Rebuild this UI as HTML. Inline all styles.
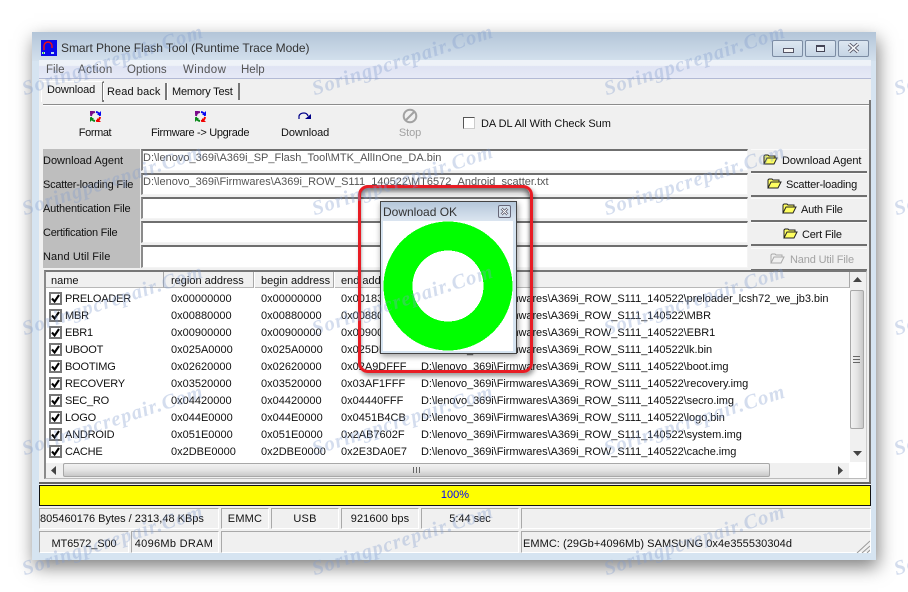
<!DOCTYPE html>
<html><head><meta charset="utf-8"><style>
html,body{margin:0;padding:0;background:#fff}
#r{position:relative;width:908px;height:592px;overflow:hidden;background:#fff;font-family:"Liberation Sans",sans-serif;font-size:11px;color:#111}
#r div,#r svg{position:absolute}
.t{white-space:nowrap;line-height:14px;height:14px}
.c{text-align:center}
.ed{left:141px;width:604px;background:#fff;border:1px solid #f4f4f4;border-top:2px solid #6f6f6f;border-left:2px solid #8a8a8a;box-sizing:content-box}
.b{left:751px;width:116px;background:#f0f0f0;border-top:1px solid #fafafa;border-bottom:2px solid #6f6f6f;text-align:center}
.h{background:#f0f0f0;border-right:1px solid #a8a8a8;border-bottom:1px solid #b8b8b8;height:15px;top:272px}
.p{background:#f0f0f0;border-top:1px solid #a9a9a9;border-left:1px solid #a9a9a9;border-right:1px solid #fff;border-bottom:1px solid #fff;box-sizing:border-box}
.k{left:49px;width:9px;height:9px;border:2px solid #777;background:#fff}
.n{left:65px;letter-spacing:-.2px}
.w{color:rgba(130,155,205,.34);font:italic bold 20.5px "Liberation Serif",serif;letter-spacing:1px;white-space:nowrap;transform:rotate(-18deg);transform-origin:0 100%;height:28px;line-height:28px;pointer-events:none}
.f{letter-spacing:-.05px}
</style></head><body><div id="r">
<svg width="0" height="0" style="left:0;top:0"><defs>
<g id="ck"><path d="M1 4.5l2.6 3L8 1" fill="none" stroke="#000" stroke-width="2.1"/></g>
<g id="fm"><path d="M2 6A4.5 4.5 0 0 1 6 2" fill="none" stroke="#7a0a8a" stroke-width="2"/><path d="M1 5V1h4z" fill="#7a0a8a"/><path d="M7 2A4.5 4.5 0 0 1 11 6" fill="none" stroke="#0808f0" stroke-width="2"/><path d="M12 1v4H8z" fill="#0808f0"/><path d="M11 7A4.5 4.5 0 0 1 7 11" fill="none" stroke="#f00000" stroke-width="2"/><path d="M12 12H8V8z" fill="#f00000"/><path d="M6 11A4.5 4.5 0 0 1 2 7" fill="none" stroke="#0a8a1a" stroke-width="2"/><path d="M1 12V8h4z" fill="#0a8a1a"/></g>
<g id="fo"><path d="M1 10V2l1-1h3l1 1h6v2H4L1 10h10l3-6H4" fill="#ffff60" stroke="#222" stroke-width="1"/></g>
</defs></svg>

<div style="left:32px;top:32px;width:844px;height:528px;background:#d6e4f1;box-shadow:2px 7px 17px rgba(0,0,0,.5)"></div>
<div style="left:32px;top:32px;width:844px;height:29px;background:linear-gradient(#b3c5d8,#d3e0ed)"></div>
<svg style="left:41px;top:40px" width="16" height="16" viewBox="0 0 16 16"><rect width="16" height="16" fill="#0a0ae8"/><path d="M3 10V6a4 4 0 0 1 8 0v2" fill="none" stroke="#f01010" stroke-width="1.5"/><path d="M1 13h3M10 13h3" stroke="#bde" stroke-width="2"/><path d="M2 13h1" stroke="#2c2" stroke-width="2"/></svg>
<div class="t" style="left:61px;top:41px;font-size:12px;letter-spacing:-.05px;color:#333">Smart Phone Flash Tool (Runtime Trace Mode)</div>

<div style="left:772px;top:40px;width:29px;height:15px;border:1px solid #7c8ca3;border-radius:2px;background:linear-gradient(#dde7f1,#c6d5e5)"></div>
<div style="left:783px;top:48px;width:9px;height:3px;border:1px solid #556;background:#f4f4f4"></div>
<div style="left:805px;top:40px;width:29px;height:15px;border:1px solid #7c8ca3;border-radius:2px;background:linear-gradient(#dde7f1,#c6d5e5)"></div>
<div style="left:816px;top:45px;width:7px;height:4px;border:1px solid #445;border-width:2px 1px 1px;background:#e8eef5"></div>
<div style="left:838px;top:40px;width:29px;height:15px;border:1px solid #7c8ca3;border-radius:2px;background:linear-gradient(#dde7f1,#c6d5e5)"></div>
<svg style="left:847px;top:43px" width="13" height="11" viewBox="0 0 13 11"><path d="M2 1l9 8M11 1L2 9" stroke="#556" stroke-width="3.4"/><path d="M2 1l9 8M11 1L2 9" stroke="#f4f6f8" stroke-width="1.6"/></svg>

<div style="left:39px;top:60px;width:832px;height:493px;background:#f0f0f0"></div>
<div style="left:39px;top:60px;width:832px;height:19px;background:linear-gradient(#eef2f8 0,#eef2f8 30%,#dfe3f3 36%,#e6e9f6 100%);border-bottom:1px solid #b3bad5;box-sizing:border-box"></div>
<div class="t" style="left:46px;top:63px;color:#555;font-size:11.5px">File</div>
<div class="t" style="left:78px;top:63px;color:#555;font-size:11.5px;letter-spacing:.45px">Action</div>
<div class="t" style="left:127px;top:63px;color:#555;font-size:11.5px">Options</div>
<div class="t" style="left:183px;top:63px;color:#555;font-size:11.5px;letter-spacing:.4px">Window</div>
<div class="t" style="left:241px;top:63px;color:#555;font-size:11.5px">Help</div>

<div style="left:41px;top:81px;width:60px;height:20px;background:#f0f0f0;border-top:1px solid #fff;border-left:1px solid #fff;border-right:2px solid #777"></div>
<div class="t" style="left:47px;top:83px;letter-spacing:-.1px">Download</div>
<div style="left:103px;top:83px;width:61px;height:17px;border-left:1px solid #fff;border-right:2px solid #777"></div>
<div class="t" style="left:107px;top:85px;letter-spacing:.1px">Read back</div>
<div style="left:167px;top:83px;width:70px;height:17px;border-left:1px solid #fff;border-right:2px solid #777"></div>
<div class="t" style="left:172px;top:85px;letter-spacing:-.2px">Memory Test</div>

<div style="left:43px;top:104px;width:826px;height:1px;background:#8c8c8c;border-bottom:1px solid #fff"></div>
<div style="left:869px;top:100px;width:2px;height:384px;background:#777"></div>
<div style="left:39px;top:482px;width:832px;height:2px;background:#666"></div>

<svg style="left:89px;top:110px" width="13" height="13" viewBox="0 0 13 13"><use href="#fm"/></svg>
<div class="t c" style="left:65px;top:126px;width:60px;letter-spacing:-.4px">Format</div>
<svg style="left:194px;top:110px" width="13" height="13" viewBox="0 0 13 13"><use href="#fm"/></svg>
<div class="t" style="left:151px;top:126px;letter-spacing:-.32px">Firmware -&gt; Upgrade</div>
<svg style="left:298px;top:112px" width="14" height="9" viewBox="0 0 14 9"><path d="M1 7V4Q2 1 6 1Q9 1 10 4" fill="none" stroke="#000088" stroke-width="1.2"/><path d="M7 7L13 7L13 2Z" fill="#000088"/></svg>
<div class="t" style="left:281px;top:126px;letter-spacing:-.1px">Download</div>
<svg style="left:402px;top:108px" width="16" height="16" viewBox="0 0 16 16"><circle cx="8" cy="8" r="6.3" fill="none" stroke="#a2a2a2" stroke-width="2"/><path d="M3.5 12.5l9-9" stroke="#a2a2a2" stroke-width="2"/></svg>
<div class="t c" style="left:390px;top:126px;width:40px;letter-spacing:-.1px;color:#a2a2a2">Stop</div>
<div style="left:463px;top:117px;width:10px;height:10px;background:#fff;border:1px solid #555;border-right-color:#ccc;border-bottom-color:#ccc"></div>
<div class="t" style="left:481px;top:117px;letter-spacing:-.05px">DA DL All With Check Sum</div>

<div style="left:43px;top:149px;width:97px;height:119px;background:#bebebe"></div>
<div class="t" style="left:43px;top:154px">Download Agent</div>
<div class="t" style="left:43px;top:178px;letter-spacing:-.23px">Scatter-loading File</div>
<div class="t" style="left:43px;top:202px;letter-spacing:-.16px">Authentication File</div>
<div class="t" style="left:43px;top:226px;letter-spacing:-.25px">Certification File</div>
<div class="t" style="left:43px;top:250px;letter-spacing:.1px">Nand Util File</div>

<div class="ed" style="top:149px;height:19px"></div>
<div class="ed" style="top:173px;height:19px"></div>
<div class="ed" style="top:197px;height:19px"></div>
<div class="ed" style="top:221px;height:19px"></div>
<div class="ed" style="top:245px;height:20px"></div>
<div class="t" style="left:143px;top:151px;color:#555">D:\lenovo_369i\A369i_SP_Flash_Tool\MTK_AllInOne_DA.bin</div>
<div class="t" style="left:143px;top:175px;color:#555">D:\lenovo_369i\Firmwares\A369i_ROW_S111_140522\MT6572_Android_scatter.txt</div>

<div class="b" style="top:149px;height:21px"></div>
<div class="b" style="top:173px;height:21px"></div>
<div class="b" style="top:198px;height:21px"></div>
<div class="b" style="top:222px;height:21px"></div>
<div class="b" style="top:248px;height:20px"></div>
<svg style="left:763px;top:154px" width="15" height="11" viewBox="0 0 15 11"><use href="#fo"/></svg>
<div class="t" style="left:782px;top:154px;letter-spacing:-.05px">Download Agent</div>
<svg style="left:767px;top:178px" width="15" height="11" viewBox="0 0 15 11"><use href="#fo"/></svg>
<div class="t" style="left:786px;top:178px;letter-spacing:-.2px">Scatter-loading</div>
<svg style="left:782px;top:203px" width="15" height="11" viewBox="0 0 15 11"><use href="#fo"/></svg>
<div class="t" style="left:801px;top:203px;letter-spacing:-.2px">Auth File</div>
<svg style="left:783px;top:228px" width="15" height="11" viewBox="0 0 15 11"><use href="#fo"/></svg>
<div class="t" style="left:802px;top:228px;letter-spacing:-.2px">Cert File</div>
<svg style="left:770px;top:253px" width="15" height="11" viewBox="0 0 15 11"><path d="M1 10V2l1-1h3l1 1h6v2H4L1 10h10l3-6H4" fill="#f0f0f0" stroke="#aaa" stroke-width="1"/></svg>
<div class="t" style="left:790px;top:253px;letter-spacing:-.15px;color:#a2a2a2">Nand Util File</div>

<div style="left:44px;top:270px;width:823px;height:209px;background:#fff;border-top:2px solid #777;border-left:2px solid #8a8a8a;border-right:1px solid #ccc;border-bottom:1px solid #bbb;box-sizing:border-box"></div>
<div class="h" style="left:46px;width:117px"></div>
<div class="h" style="left:164px;width:89px"></div>
<div class="h" style="left:255px;width:78px"></div>
<div class="h" style="left:335px;width:514px"></div>
<div class="t" style="left:51px;top:274px">name</div>
<div class="t" style="left:171px;top:274px">region address</div>
<div class="t" style="left:261px;top:274px">begin address</div>
<div class="t" style="left:341px;top:274px">end address</div>

<div class="k" style="top:292px"></div><svg style="left:51px;top:294px" width="9" height="9"><use href="#ck"/></svg><div class="t n" style="top:292px">PRELOADER</div><div class="t" style="left:171px;top:292px">0x00000000</div><div class="t" style="left:261px;top:292px">0x00000000</div><div class="t" style="left:341px;top:292px">0x00183FFF</div><div class="t f" style="left:421px;top:292px">D:\lenovo_369i\Firmwares\A369i_ROW_S111_140522\preloader_lcsh72_we_jb3.bin</div>
<div class="k" style="top:309px"></div><svg style="left:51px;top:311px" width="9" height="9"><use href="#ck"/></svg><div class="t n" style="top:309px">MBR</div><div class="t" style="left:171px;top:309px">0x00880000</div><div class="t" style="left:261px;top:309px">0x00880000</div><div class="t" style="left:341px;top:309px">0x00880FFF</div><div class="t f" style="left:421px;top:309px">D:\lenovo_369i\Firmwares\A369i_ROW_S111_140522\MBR</div>
<div class="k" style="top:326px"></div><svg style="left:51px;top:328px" width="9" height="9"><use href="#ck"/></svg><div class="t n" style="top:326px">EBR1</div><div class="t" style="left:171px;top:326px">0x00900000</div><div class="t" style="left:261px;top:326px">0x00900000</div><div class="t" style="left:341px;top:326px">0x00900FFF</div><div class="t f" style="left:421px;top:326px">D:\lenovo_369i\Firmwares\A369i_ROW_S111_140522\EBR1</div>
<div class="k" style="top:343px"></div><svg style="left:51px;top:345px" width="9" height="9"><use href="#ck"/></svg><div class="t n" style="top:343px">UBOOT</div><div class="t" style="left:171px;top:343px">0x025A0000</div><div class="t" style="left:261px;top:343px">0x025A0000</div><div class="t" style="left:341px;top:343px">0x025DFFFF</div><div class="t f" style="left:421px;top:343px">D:\lenovo_369i\Firmwares\A369i_ROW_S111_140522\lk.bin</div>
<div class="k" style="top:360px"></div><svg style="left:51px;top:362px" width="9" height="9"><use href="#ck"/></svg><div class="t n" style="top:360px">BOOTIMG</div><div class="t" style="left:171px;top:360px">0x02620000</div><div class="t" style="left:261px;top:360px">0x02620000</div><div class="t" style="left:341px;top:360px">0x02A9DFFF</div><div class="t f" style="left:421px;top:360px">D:\lenovo_369i\Firmwares\A369i_ROW_S111_140522\boot.img</div>
<div class="k" style="top:377px"></div><svg style="left:51px;top:379px" width="9" height="9"><use href="#ck"/></svg><div class="t n" style="top:377px">RECOVERY</div><div class="t" style="left:171px;top:377px">0x03520000</div><div class="t" style="left:261px;top:377px">0x03520000</div><div class="t" style="left:341px;top:377px">0x03AF1FFF</div><div class="t f" style="left:421px;top:377px">D:\lenovo_369i\Firmwares\A369i_ROW_S111_140522\recovery.img</div>
<div class="k" style="top:394px"></div><svg style="left:51px;top:396px" width="9" height="9"><use href="#ck"/></svg><div class="t n" style="top:394px">SEC_RO</div><div class="t" style="left:171px;top:394px">0x04420000</div><div class="t" style="left:261px;top:394px">0x04420000</div><div class="t" style="left:341px;top:394px">0x04440FFF</div><div class="t f" style="left:421px;top:394px">D:\lenovo_369i\Firmwares\A369i_ROW_S111_140522\secro.img</div>
<div class="k" style="top:411px"></div><svg style="left:51px;top:413px" width="9" height="9"><use href="#ck"/></svg><div class="t n" style="top:411px">LOGO</div><div class="t" style="left:171px;top:411px">0x044E0000</div><div class="t" style="left:261px;top:411px">0x044E0000</div><div class="t" style="left:341px;top:411px">0x0451B4CB</div><div class="t f" style="left:421px;top:411px">D:\lenovo_369i\Firmwares\A369i_ROW_S111_140522\logo.bin</div>
<div class="k" style="top:428px"></div><svg style="left:51px;top:430px" width="9" height="9"><use href="#ck"/></svg><div class="t n" style="top:428px">ANDROID</div><div class="t" style="left:171px;top:428px">0x051E0000</div><div class="t" style="left:261px;top:428px">0x051E0000</div><div class="t" style="left:341px;top:428px">0x2AB7602F</div><div class="t f" style="left:421px;top:428px">D:\lenovo_369i\Firmwares\A369i_ROW_S111_140522\system.img</div>
<div class="k" style="top:445px"></div><svg style="left:51px;top:447px" width="9" height="9"><use href="#ck"/></svg><div class="t n" style="top:445px">CACHE</div><div class="t" style="left:171px;top:445px">0x2DBE0000</div><div class="t" style="left:261px;top:445px">0x2DBE0000</div><div class="t" style="left:341px;top:445px">0x2E3DA0E7</div><div class="t f" style="left:421px;top:445px">D:\lenovo_369i\Firmwares\A369i_ROW_S111_140522\cache.img</div>

<div style="left:850px;top:272px;width:16px;height:190px;background:#f0f0f0"></div>
<div style="left:850px;top:290px;width:14px;height:139px;border:1px solid #a8a8a8;border-radius:2px;box-sizing:border-box;background:linear-gradient(90deg,#f2f2f2,#e4e4e4 50%,#c8c8c8)"></div>
<div style="left:853px;top:356px;width:7px;height:7px;background:repeating-linear-gradient(#666 0,#666 1px,transparent 1px,transparent 3px)"></div>
<svg style="left:853px;top:277px" width="9" height="5"><path d="M0 5L4.5 0L9 5Z" fill="#444"/></svg>
<svg style="left:853px;top:451px" width="9" height="5"><path d="M0 0L4.5 5L9 0Z" fill="#444"/></svg>
<div style="left:46px;top:463px;width:803px;height:15px;background:#f0f0f0"></div>
<div style="left:63px;top:463px;width:707px;height:14px;border:1px solid #a8a8a8;border-radius:2px;box-sizing:border-box;background:linear-gradient(#f2f2f2,#e4e4e4 50%,#c8c8c8)"></div>
<div style="left:413px;top:467px;width:7px;height:6px;background:repeating-linear-gradient(90deg,#666 0,#666 1px,transparent 1px,transparent 3px)"></div>
<svg style="left:51px;top:466px" width="5" height="9"><path d="M5 0L0 4.5L5 9Z" fill="#444"/></svg>
<svg style="left:838px;top:466px" width="5" height="9"><path d="M0 0L5 4.5L0 9Z" fill="#444"/></svg>

<div style="left:39px;top:485px;width:832px;height:21px;background:#ff0;border:1px solid #111;box-sizing:border-box"></div>
<div class="t c" style="left:39px;top:488px;width:832px;color:#0000ff">100%</div>

<div class="p" style="left:39px;top:508px;width:180px;height:21px"></div>
<div class="p" style="left:221px;top:508px;width:48px;height:21px"></div>
<div class="p" style="left:271px;top:508px;width:68px;height:21px"></div>
<div class="p" style="left:341px;top:508px;width:78px;height:21px"></div>
<div class="p" style="left:421px;top:508px;width:98px;height:21px"></div>
<div class="p" style="left:521px;top:508px;width:350px;height:21px"></div>
<div class="p" style="left:39px;top:531px;width:90px;height:22px"></div>
<div class="p" style="left:131px;top:531px;width:88px;height:22px"></div>
<div class="p" style="left:221px;top:531px;width:298px;height:22px"></div>
<div class="p" style="left:521px;top:531px;width:350px;height:22px"></div>
<div class="t" style="left:40px;top:512px">805460176 Bytes / 2313,48 KBps</div>
<div class="t c" style="left:221px;top:512px;width:48px;letter-spacing:.2px">EMMC</div>
<div class="t c" style="left:271px;top:512px;width:68px;letter-spacing:.2px">USB</div>
<div class="t c" style="left:341px;top:512px;width:78px;letter-spacing:.1px">921600 bps</div>
<div class="t c" style="left:421px;top:512px;width:98px">5:44 sec</div>
<div class="t c" style="left:39px;top:537px;width:90px;letter-spacing:-.1px">MT6572_S00</div>
<div class="t c" style="left:130px;top:537px;width:88px;letter-spacing:.3px">4096Mb DRAM</div>
<div class="t" style="left:523px;top:537px;letter-spacing:.05px">EMMC: (29Gb+4096Mb) SAMSUNG 0x4e355530304d</div>
<svg style="left:856px;top:540px" width="14" height="13"><path d="M1 13L14 1M6 13L14 6M11 13L14 10" stroke="#999" stroke-width="1"/></svg>

<div style="left:360px;top:187px;width:170px;height:184px;box-sizing:border-box;border-radius:9px;box-shadow:inset 0 5px 5px rgba(0,0,0,.5),inset 0 0 3px rgba(0,0,0,.3)"></div>
<div style="left:380px;top:201px;width:137px;height:153px;box-sizing:border-box;background:#d6e4f1;border:1px solid #444;box-shadow:1px 2px 6px rgba(0,0,0,.4)"></div>
<div style="left:381px;top:202px;width:135px;height:19px;background:linear-gradient(#b5c7da,#dbe5f0)"></div>
<div class="t" style="left:383px;top:205px;font-size:12px;color:#333">Download OK</div>
<div style="left:498px;top:205px;width:11px;height:11px;border:1px solid #667;border-radius:2px;background:#d3dfeb"></div>
<svg style="left:500px;top:207px" width="9" height="9"><path d="M1.5 1.5l6 6M7.5 1.5l-6 6" stroke="#445" stroke-width="2.4"/><path d="M1.5 1.5l6 6M7.5 1.5l-6 6" stroke="#fff" stroke-width="1"/></svg>
<div style="left:383px;top:221px;width:130px;height:130px;background:#fff"></div>
<svg style="left:383px;top:221px" width="130" height="130" shape-rendering="crispEdges"><circle cx="65" cy="65" r="50" fill="none" stroke="#00ff00" stroke-width="29"/></svg>
<div style="left:358px;top:185px;width:175px;height:188px;box-sizing:border-box;border:3px solid #e81c24;border-radius:10px;box-shadow:2px 3px 5px rgba(0,0,0,.4)"></div>

<div class="w" style="left:27px;top:75px">Soringpcrepair.Com</div>
<div class="w" style="left:317px;top:75px">Soringpcrepair.Com</div>
<div class="w" style="left:609px;top:75px">Soringpcrepair.Com</div>
<div class="w" style="left:899px;top:75px">Soringpcrepair.Com</div>
<div class="w" style="left:27px;top:195px">Soringpcrepair.Com</div>
<div class="w" style="left:317px;top:195px">Soringpcrepair.Com</div>
<div class="w" style="left:609px;top:195px">Soringpcrepair.Com</div>
<div class="w" style="left:899px;top:195px">Soringpcrepair.Com</div>
<div class="w" style="left:27px;top:315px">Soringpcrepair.Com</div>
<div class="w" style="left:317px;top:315px">Soringpcrepair.Com</div>
<div class="w" style="left:609px;top:315px">Soringpcrepair.Com</div>
<div class="w" style="left:899px;top:315px">Soringpcrepair.Com</div>
<div class="w" style="left:27px;top:435px">Soringpcrepair.Com</div>
<div class="w" style="left:317px;top:435px">Soringpcrepair.Com</div>
<div class="w" style="left:609px;top:435px">Soringpcrepair.Com</div>
<div class="w" style="left:899px;top:435px">Soringpcrepair.Com</div>
<div class="w" style="left:27px;top:555px">Soringpcrepair.Com</div>
<div class="w" style="left:317px;top:555px">Soringpcrepair.Com</div>
<div class="w" style="left:609px;top:555px">Soringpcrepair.Com</div>
<div class="w" style="left:899px;top:555px">Soringpcrepair.Com</div>

</div></body></html>
